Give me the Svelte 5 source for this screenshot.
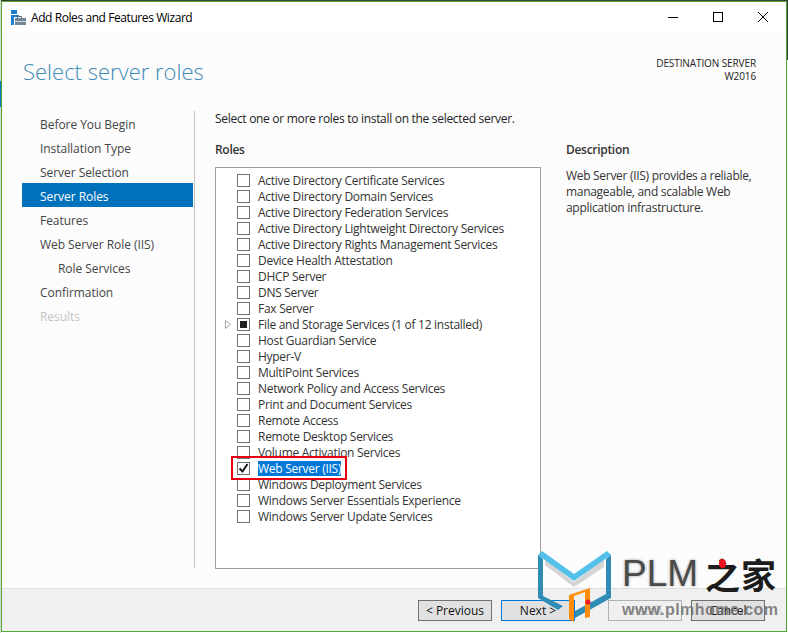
<script>
  const steps = [
    { label: 'Before You Begin' },
    { label: 'Installation Type' },
    { label: 'Server Selection' },
    { label: 'Server Roles', active: true },
    { label: 'Features' },
    { label: 'Web Server Role (IIS)' },
    { label: 'Role Services', sub: true },
    { label: 'Confirmation' },
    { label: 'Results', disabled: true }
  ];
  const roles = [
    { label: 'Active Directory Certificate Services' },
    { label: 'Active Directory Domain Services' },
    { label: 'Active Directory Federation Services' },
    { label: 'Active Directory Lightweight Directory Services' },
    { label: 'Active Directory Rights Management Services' },
    { label: 'Device Health Attestation' },
    { label: 'DHCP Server' },
    { label: 'DNS Server' },
    { label: 'Fax Server' },
    { label: 'File and Storage Services (1 of 12 installed)', partial: true, expand: true },
    { label: 'Host Guardian Service' },
    { label: 'Hyper-V' },
    { label: 'MultiPoint Services' },
    { label: 'Network Policy and Access Services' },
    { label: 'Print and Document Services' },
    { label: 'Remote Access' },
    { label: 'Remote Desktop Services' },
    { label: 'Volume Activation Services' },
    { label: 'Web Server (IIS)', checked: true },
    { label: 'Windows Deployment Services' },
    { label: 'Windows Server Essentials Experience' },
    { label: 'Windows Server Update Services' }
  ];
</script>

<div class="desk">
  <span class="edge-top"></span>
  <span class="edge-right"></span>
  <span class="edge-left"></span>
  <span class="edge-blue"></span>

  <div class="window">
    <header class="titlebar">
      <svg class="appicon" width="15" height="15" viewBox="0 0 15 15">
        <rect x="0" y="0" width="6" height="4" fill="#1e80cc" />
        <rect x="0" y="5" width="8" height="2" fill="#1e80cc" />
        <rect x="0" y="7" width="3" height="8" fill="#1e80cc" />
        <path d="M6.5 8V6.5h4V8" fill="none" stroke="#5c6a74" />
        <rect x="4" y="8" width="11" height="7" fill="#6f8797" />
        <rect x="4" y="11" width="11" height="1" fill="#d4dbe0" />
      </svg>
      <span class="title">Add Roles and Features Wizard</span>
      <div class="controls">
        <svg width="12" height="12" viewBox="0 0 12 12"><path d="M1 6.5h10" stroke="#000" fill="none" /></svg>
        <svg width="12" height="12" viewBox="0 0 12 12"><rect x="1.5" y="1.5" width="9" height="9" stroke="#000" fill="none" /></svg>
        <svg width="12" height="12" viewBox="0 0 12 12"><path d="M1 1l10 10M11 1L1 11" stroke="#000" fill="none" /></svg>
      </div>
    </header>

    <div class="head">
      <h1>Select server roles</h1>
      <div class="dest"><div>DESTINATION SERVER</div><div>W2016</div></div>
    </div>

    <div class="main">
      <nav class="steps">
        {#each steps as s}
          <div class="step" class:active={s.active} class:sub={s.sub} class:disabled={s.disabled}>{s.label}</div>
        {/each}
      </nav>
      <section class="content">
        <p class="intro">Select one or more roles to install on the selected server.</p>
        <div class="cols">
          <div class="rolescol">
            <h2>Roles</h2>
            <div class="listbox">
              {#each roles as r}
                <div class="role">
                  <span class="arrow">
                    {#if r.expand}
                      <svg width="6" height="9" viewBox="0 0 6 9"><path d="M.5.5l5 4-5 4z" fill="#fff" stroke="#a6a6a6" /></svg>
                    {/if}
                  </span>
                  <span class="box">
                    {#if r.partial}<span class="fill"></span>{/if}
                    {#if r.checked}
                      <svg width="11" height="11" viewBox="0 0 11 11"><path d="M1.5 5.5l3 3 5-7.5" fill="none" stroke="#1a1a1a" stroke-width="2" /></svg>
                    {/if}
                  </span>
                  <span class="rolelabel" class:selected={r.checked}>{r.label}</span>
                </div>
              {/each}
            </div>
          </div>
          <aside class="desc">
            <h2>Description</h2>
            <p>Web Server (IIS) provides a reliable, manageable, and scalable Web application infrastructure.</p>
          </aside>
        </div>
      </section>
    </div>

    <footer class="footer">
      <button>&lt; Previous</button>
      <button class="primary">Next &gt;</button>
      <button class="off">Install</button>
      <button>Cancel</button>
    </footer>

    <div class="redbox"></div>

    <div class="mark">
      <svg class="logo" width="76" height="76" viewBox="0 0 76 76">
        <path d="M7 8L36 31L66 8L66 16L36 36L7 14z" fill="#d4d4d4" />
        <path d="M0 4L4 0L36 23L69 0L73 4L36 30z" fill="#53c0ea" />
        <path d="M0 4L5 8V45L25 55L20 59L0 47z" fill="#2f8db5" />
        <path d="M73 4L68 8V43L37 60V67L73 47z" fill="#2f8db5" />
        <path d="M31 44L52 37V66L47 67V41L36 45V71L31 68z" fill="#ff8c0a" />
        <circle cx="50" cy="51" r="2.6" fill="#f01c2c" />
      </svg>
      <span class="plm">PLM</span>
      <span class="zh">之家</span>
      <span class="dot"></span>
      <span class="url">www.plmhome.com</span>
    </div>
  </div>
</div>

<style>
  :global(body) { margin: 0; background: #fff; }
  .desk {
    position: relative;
    box-sizing: border-box;
    width: 788px;
    height: 633px;
    padding: 1px;
    background: #fff;
    overflow: hidden;
  }
  .edge-top { position: absolute; left: 0; top: 0; width: 788px; height: 1px; background: #3c3c3c; }
  .edge-right { position: absolute; right: 0; top: 0; width: 1px; height: 60px; background: #3c3c3c; }
  .edge-left { position: absolute; left: 0; top: 0; width: 1px; height: 633px; background: #d8d8d8; }
  .edge-blue { position: absolute; left: 0; top: 81px; width: 1px; height: 26px; background: #0a78c8; }
  .window {
    position: relative;
    box-sizing: border-box;
    width: 786px;
    height: 631px;
    display: flex;
    flex-direction: column;
    background: #fcfcfc;
    border: 1px solid #4ea72e;
    font-family: "Open Sans", "Noto Sans", sans-serif;
    font-size: 12px;
    color: #333;
    overflow: hidden;
  }
  .titlebar {
    height: 30px;
    flex: none;
    display: flex;
    align-items: center;
    background: #fff;
    padding-left: 9px;
  }
  .appicon { margin-right: 5px; }
  .title { color: #000; letter-spacing: -0.42px; }
  .controls {
    margin-left: auto;
    display: flex;
    gap: 33px;
    padding-right: 17px;
  }
  .head {
    height: 79px;
    flex: none;
    display: flex;
    justify-content: space-between;
    padding: 0 30px 0 21px;
  }
  h1 {
    margin: 23px 0 0;
    font-size: 22px;
    font-weight: 300;
    color: #3f8ab5;
    line-height: 32px;
  }
  .dest {
    margin-top: 25px;
    text-align: right;
    font-size: 10px;
    letter-spacing: -0.1px;
    line-height: 13px;
    color: #222;
  }
  .main { flex: 1; display: flex; min-height: 0; }
  .steps {
    width: 171px;
    margin-left: 20px;
    flex: none;
  }
  .step {
    height: 24px;
    line-height: 28px;
    padding-left: 18px;
    color: #444;
    letter-spacing: -0.05px;
  }
  .step.sub { padding-left: 36px; }
  .step.active { background: #0072bc; color: #fff; }
  .step.disabled { color: #c4c4c4; }
  .content {
    flex: 1;
    margin-left: 1px;
    border-left: 1px solid #c4c4c4;
    padding-left: 20px;
    margin-bottom: 20px;
    min-width: 0;
  }
  .intro { margin: 0; line-height: 16px; color: #222; letter-spacing: -0.3px; }
  .cols { display: flex; flex: 1; }
  h2 {
    margin: 0;
    font-size: 12px;
    font-weight: 600;
    line-height: 16px;
    color: #333;
    letter-spacing: -0.3px;
  }
  .rolescol { width: 326px; flex: none; margin-top: 15px; }
  .listbox {
    box-sizing: border-box;
    height: 402px;
    margin-top: 9px;
    border: 1px solid #a0a0a0;
    background: #fff;
    padding-top: 4px;
  }
  .role { height: 16px; display: flex; align-items: center; }
  .arrow { width: 9px; margin-left: 9px; display: flex; }
  .box {
    box-sizing: border-box;
    width: 13px;
    height: 13px;
    margin-left: 3px;
    margin-top: 1px;
    border: 1px solid #707070;
    background: #fff;
    display: flex;
    align-items: center;
    justify-content: center;
  }
  .fill { width: 7px; height: 7px; background: #222; }
  .rolelabel { margin-left: 8px; color: #333; white-space: nowrap; letter-spacing: -0.28px; line-height: 15px; }
  .rolelabel.selected { background: #0078d7; color: #fff; }
  .desc { width: 200px; margin: 15px 0 0 25px; }
  .desc p { margin: 10px 0 0; line-height: 16px; color: #333; letter-spacing: -0.3px; }
  .footer {
    height: 43px;
    flex: none;
    box-sizing: border-box;
    display: flex;
    gap: 9px;
    padding: 11px 0 0 416px;
    background: #f0f0f0;
    border-top: 1px solid #dfdfdf;
  }
  button {
    box-sizing: border-box;
    width: 74px;
    height: 21px;
    padding: 0;
    border: 1px solid #707070;
    background: #e1e1e1;
    font: inherit;
    color: #111;
  }
  button.primary { border-color: #0078d7; }
  button.off { background: #f0f0f0; border-color: #adb2b5; color: #bbb; margin-left: 24px; }
  .redbox {
    position: absolute;
    left: 229px;
    top: 454px;
    width: 112px;
    height: 20px;
    border: 2px solid #e60012;
  }
  .mark { position: absolute; left: 536px; top: 549px; width: 248px; height: 80px; pointer-events: none; }
  .logo { position: absolute; left: 0; top: 0; }
  .plm {
    position: absolute;
    left: 84px;
    top: 2px;
    font-family: "Liberation Sans", sans-serif;
    font-size: 37px;
    line-height: 42px;
    color: #4a4a4a;
    text-shadow: 0 0 3px rgba(90, 90, 90, .6);
  }
  .zh {
    position: absolute;
    left: 167px;
    top: 3px;
    font-family: "Noto Sans CJK SC", sans-serif;
    font-weight: 700;
    font-size: 35px;
    letter-spacing: 1px;
    line-height: 40px;
    color: #1c1c1c;
    white-space: nowrap;
  }
  .dot { position: absolute; left: 181px; top: 8px; width: 7px; height: 9px; border-radius: 50%; background: #f01020; }
  .url {
    position: absolute;
    left: 84px;
    top: 49px;
    font-family: "Liberation Sans", sans-serif;
    font-weight: 700;
    font-size: 16px;
    letter-spacing: .45px;
    line-height: 20px;
    color: rgba(110, 110, 110, .85);
  }
</style>
